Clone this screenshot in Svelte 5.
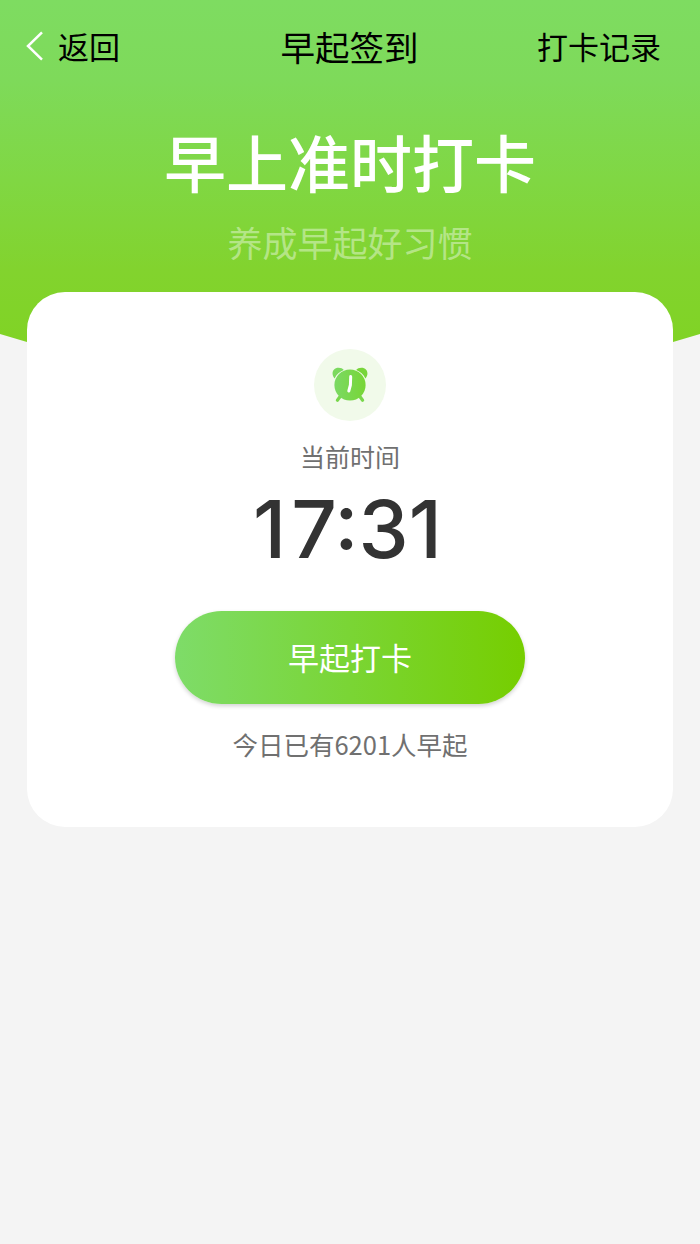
<script>
  let { time = '17:31', count = 6201 } = $props();
</script>

<div class="page">
  <div class="hero">
    <header class="navbar">
      <button type="button" class="nav-back">
        <svg width="18" height="30" viewBox="0 0 18 30" aria-hidden="true">
          <path d="M16 1.4 L2 15 L16 28.6" fill="none" stroke="#fff" stroke-width="2.5" />
        </svg>
        <span>返回</span>
      </button>
      <h1 class="nav-title">早起签到</h1>
      <button type="button" class="nav-record">打卡记录</button>
    </header>
    <p class="slogan">早上准时打卡</p>
    <p class="slogan-sub">养成早起好习惯</p>
  </div>

  <main class="card">
    <div class="clock">
      <svg width="36" height="36" viewBox="0 0 36 36" aria-hidden="true">
        <defs>
          <linearGradient id="clock-fill" x1="0" y1="0" x2="1" y2="0">
            <stop offset="0" stop-color="#7bd964" />
            <stop offset="1" stop-color="#78d636" />
          </linearGradient>
        </defs>
        <path d="M2.6 11.4 C-1.2 7.4 0.4 0.8 6.6 0.8 C8.9 0.8 10.6 1.6 11.8 3 C7.6 4.6 4.6 7.4 2.6 11.4 Z" fill="#7bd95e" />
        <path d="M33.4 11.4 C37.2 7.4 35.6 0.8 29.4 0.8 C27.1 0.8 25.4 1.6 24.2 3 C28.4 4.6 31.4 7.4 33.4 11.4 Z" fill="#78d53a" />
        <path d="M8.5 29 L5.4 33.2 M27.5 29 L30.6 33.2" stroke="#79d74c" stroke-width="3.2" stroke-linecap="round" />
        <circle cx="18" cy="18" r="15.6" fill="url(#clock-fill)" />
        <path d="M18.7 9.6 L18.4 18 L16.8 24" fill="none" stroke="#fff" stroke-width="3" stroke-linecap="round" stroke-linejoin="round" />
      </svg>
    </div>
    <p class="label">当前时间</p>
    <p class="time"><span>{time[0]}</span>{time.slice(1)}</p>
    <button type="button" class="checkin">早起打卡</button>
    <p class="count">今日已有<span>{count}</span>人早起</p>
  </main>
</div>

<style>
  :global(body) {
    background: #f4f4f4;
  }
  .page {
    min-height: 1244px;
    background: #f4f4f4;
    font-family: 'Noto Sans CJK SC', sans-serif;
  }
  p,
  h1 {
    margin: 0;
  }
  button {
    padding: 0;
    border: none;
    background: none;
    font-family: inherit;
    cursor: pointer;
  }
  .hero {
    box-sizing: border-box;
    height: 350px;
    background: linear-gradient(180deg, #7edc61 0, #7eda5a 80px, #80d743 180px, #82d32e 270px, #80d324 350px);
    clip-path: polygon(0 0, 100% 0, 100% 334px, 673px 342px, 600px 350px, 100px 350px, 27px 342px, 0 334px);
    text-align: center;
  }
  .navbar {
    display: grid;
    grid-template-columns: 1fr auto 1fr;
    align-items: center;
    height: 92px;
    padding: 0 39px 0 26px;
  }
  .nav-back {
    justify-self: start;
    display: flex;
    align-items: center;
    gap: 14px;
    font-size: 31px;
    line-height: 46px;
    color: #000;
  }
  .nav-back svg {
    margin-top: -1px;
  }
  .nav-title {
    font-size: 34.5px;
    line-height: 50px;
    font-weight: 400;
    color: #000;
    transform: translateX(6px);
  }
  .nav-record {
    justify-self: end;
    font-size: 31px;
    line-height: 46px;
    color: #000;
  }
  .slogan {
    margin-top: 24px;
    font-size: 62px;
    line-height: 90px;
    font-weight: 500;
    color: #fff;
  }
  .slogan-sub {
    margin-top: 11px;
    font-size: 35px;
    line-height: 50px;
    color: rgba(255, 255, 255, 0.42);
  }
  .card {
    position: relative;
    display: flex;
    flex-direction: column;
    align-items: center;
    box-sizing: border-box;
    height: 535px;
    margin: -58px 27px 0;
    padding-top: 57px;
    border-radius: 38px;
    background: #fff;
  }
  .clock {
    display: flex;
    align-items: center;
    justify-content: center;
    width: 72px;
    height: 72px;
    border-radius: 50%;
    background: #f1faea;
  }
  .label {
    margin-top: 17px;
    font-size: 25px;
    line-height: 36px;
    color: #707070;
  }
  .time {
    margin-top: 5px;
    padding-right: 5px;
    font-family: Inter, sans-serif;
    font-size: 80px;
    line-height: 100px;
    font-weight: 500;
    color: #333;
  }
  .time span {
    letter-spacing: 5px;
  }
  .checkin {
    width: 350px;
    height: 93px;
    margin-top: 32px;
    padding-bottom: 2px;
    border-radius: 47px;
    background: linear-gradient(90deg, #7edc69, #76ce00);
    box-shadow: 0 2px 4px rgba(0, 0, 0, 0.18);
    font-size: 31px;
    color: #fff;
  }
  .count {
    margin-top: 22px;
    font-size: 25.5px;
    line-height: 36px;
    color: #707070;
  }
</style>
